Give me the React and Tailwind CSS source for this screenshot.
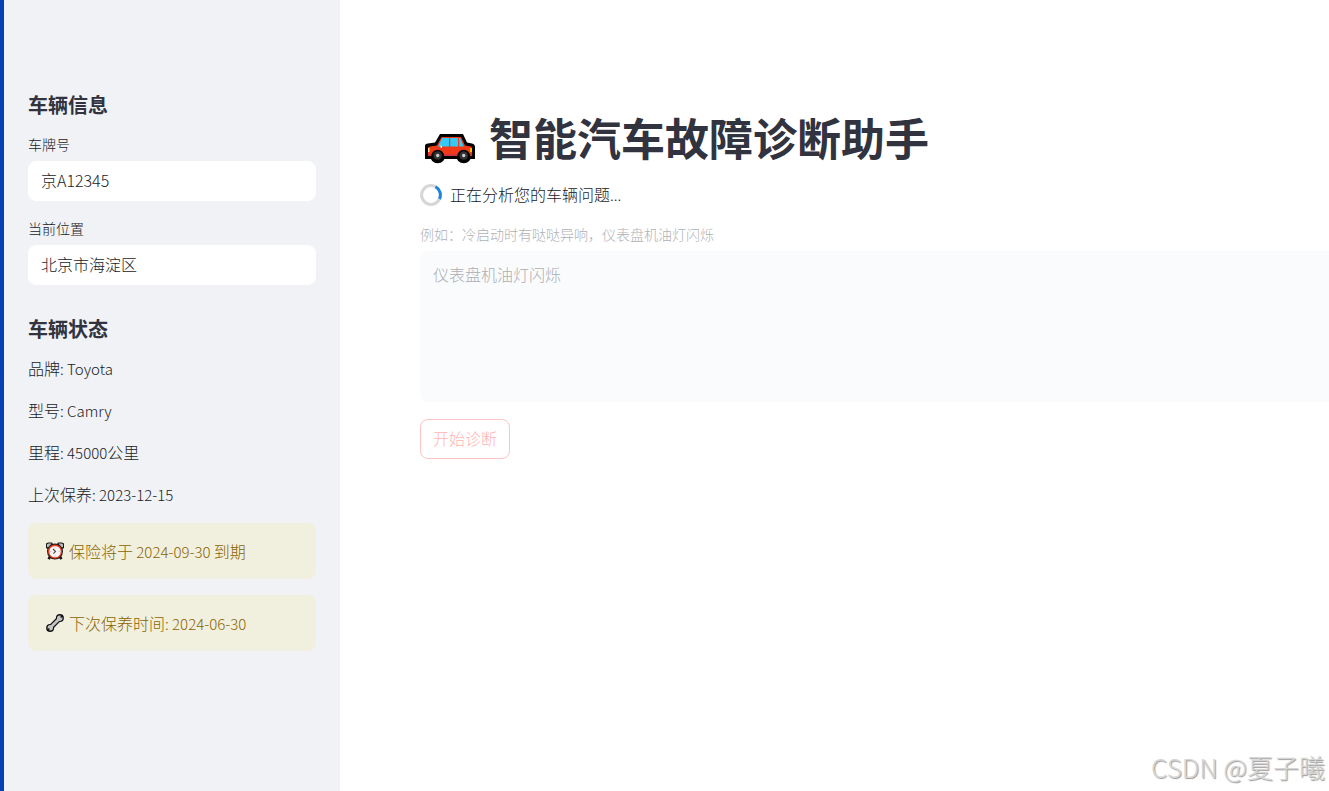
import React, { useState } from "react";

const vehicleStatus = [
  { label: "品牌", value: "Toyota" },
  { label: "型号", value: "Camry" },
  { label: "里程", value: "45000", unit: "公里" },
  { label: "上次保养", value: "2023-12-15" },
];

const CarIcon = () => (
  <svg className="w-[50px] h-[30px] shrink-0" viewBox="0 0 50 30" aria-hidden="true">
    <path d="M0 12Q0 9.5 3 9.5L10 8.5L15 0H38L42 8.5L47 9.5Q50 10 50 13V25H0Z" fill="#000" />
    <circle cx="12.7" cy="21.5" r="7.8" fill="#000" />
    <circle cx="38.7" cy="21.5" r="7.8" fill="#000" />
    <path d="M3 14Q3 12.5 5 12.5L12 11.5L16.5 3H36L40 11.5L46 12.5Q47 13 47 15V22H3Z" fill="#f03a17" />
    <path d="M3 20H47V22H3Z" fill="#d13438" />
    <path d="M17 4H24V12.5H13Z" fill="#35c9f5" />
    <path d="M25.2 4H33V12.5H25.2Z" fill="#35c9f5" />
    <path d="M34.2 4H35.2L38.8 12.5H34.2Z" fill="#35c9f5" />
    <path d="M3 14H4.5V18H3Z" fill="#ffe08a" />
    <path d="M45 14H47V18H45Z" fill="#ffb900" />
    <path d="M15.5 11.5H17V14H15.5Z" fill="#e3e3e3" />
    <path d="M6.4 22A6.3 6.3 0 0 1 19 22ZM32.4 22A6.3 6.3 0 0 1 45 22Z" fill="#000" />
    <circle cx="12.7" cy="21.5" r="4.3" fill="#333" />
    <circle cx="38.7" cy="21.5" r="4.3" fill="#333" />
    <circle cx="12.7" cy="21.5" r="1.7" fill="#ccc" />
    <circle cx="38.7" cy="21.5" r="1.7" fill="#ccc" />
  </svg>
);

const ClockIcon = () => (
  <svg className="w-[18px] h-[18px] shrink-0" viewBox="0 0 18 18" aria-hidden="true">
    <path d="M0 6V1.5L2 0.5H6L7 2H11L12 0.5H16L18 1.5V6L15.5 7.5H2.5Z" fill="#1a1a1a" />
    <path d="M1 5V2.2L2.6 1.4H5.6L2.3 5.6ZM17 5V2.2L15.4 1.4H12.4L15.7 5.6Z" fill="#bcbcbc" />
    <path d="M4.5 14L2.6 17.2M13.5 14L15.4 17.2" stroke="#111" strokeWidth="2.6" />
    <circle cx="9" cy="9.6" r="8" fill="#1a1a1a" />
    <circle cx="9" cy="9.6" r="7.1" fill="#e8391c" />
    <circle cx="9" cy="9.6" r="5.7" fill="#f7f7f7" />
    <path d="M7 7L9.5 9.6L7.3 11.7" fill="none" stroke="#444" strokeWidth="1.1" />
    <path d="M9 4.8V5.8M9 13.4V14.4M4.2 9.6H5.2M12.8 9.6H13.8" stroke="#999" strokeWidth="0.8" />
  </svg>
);

const WrenchIcon = () => (
  <svg className="w-[18px] h-[18px] shrink-0" viewBox="0 0 18 18" aria-hidden="true">
    <path d="M4.2 13.8L13.8 4.2" stroke="#111" strokeWidth="5.4" />
    <circle cx="13.9" cy="4.1" r="4" fill="#111" />
    <circle cx="4.1" cy="13.9" r="4" fill="#111" />
    <circle cx="13.7" cy="4.3" r="2.7" fill="#c4c4c4" />
    <circle cx="4.3" cy="13.7" r="2.7" fill="#c4c4c4" />
    <path d="M4.2 13.8L13.8 4.2" stroke="#c4c4c4" strokeWidth="2.9" />
    <path d="M14.6 3.4L16.6 1.4M3.4 14.6L1.4 16.6" stroke="#111" strokeWidth="1.4" />
  </svg>
);

const Spinner = () => (
  <svg className="w-[22px] h-[22px] shrink-0" viewBox="0 0 22 22" aria-hidden="true">
    <circle cx="11" cy="11" r="9.4" fill="none" stroke="#d5d6d8" strokeWidth="3" />
    <path d="M15.5 2.8A9.4 9.4 0 0 1 19.5 15" fill="none" stroke="#1c83e1" strokeWidth="3" />
  </svg>
);

// Latin letters and digits look too large next to the Chinese text at the same size
const Latin = ({ children }) => <span className="text-[15px] leading-none">{children}</span>;

const TextField = ({ id, label, value, onChange }) => (
  <div className="flex flex-col gap-[7px]">
    <label htmlFor={id} className="text-sm leading-5">
      {label}
    </label>
    <input
      id={id}
      type="text"
      value={value}
      onChange={(e) => onChange(e.target.value)}
      className="w-full h-10 px-3 pb-0.5 rounded-lg bg-white border border-white text-base outline-none"
    />
  </div>
);

const Notice = ({ icon, children }) => (
  <div className="flex items-center gap-[5px] h-14 px-4 pl-[18px] rounded-lg bg-[#f1f0df] text-[#8a6400] text-base">
    {icon}
    <p>{children}</p>
  </div>
);

const App = () => {
  const [plate, setPlate] = useState("京A12345");
  const [location, setLocation] = useState("北京市海淀区");

  return (
    <div className="relative flex min-h-screen bg-white text-[#181a26] font-light font-['Noto_Sans_CJK_SC',sans-serif]">
      {/* Sidebar */}
      <aside className="w-[340px] shrink-0 border-l-4 border-[#0540b5] bg-[#f0f2f6] px-6 pt-[93px] pb-24">
        <section>
          <h2 className="text-xl leading-6 font-bold text-[#31333f]">车辆信息</h2>
          <div className="flex flex-col gap-[17px] mt-[17px]">
            <TextField id="plate" label="车牌号" value={plate} onChange={setPlate} />
            <TextField id="location" label="当前位置" value={location} onChange={setLocation} />
          </div>
        </section>

        <section className="mt-8">
          <h2 className="text-xl leading-6 font-bold text-[#31333f]">车辆状态</h2>
          <ul className="flex flex-col gap-4 mt-3.5">
            {vehicleStatus.map((item) => (
              <li key={item.label} className="text-base leading-[26px]">
                {item.label}
                <Latin>: {item.value}</Latin>
                {item.unit}
              </li>
            ))}
          </ul>
          <div className="flex flex-col gap-4 mt-4">
            <Notice icon={<ClockIcon />}>
              保险将于<Latin> 2024-09-30 </Latin>到期
            </Notice>
            <Notice icon={<WrenchIcon />}>
              下次保养时间<Latin>: 2024-06-30</Latin>
            </Notice>
          </div>
        </section>
      </aside>

      {/* Main content */}
      <main className="flex-1 min-w-0 pl-20 pt-[110px]">
        <h1 className="flex items-end gap-3.5 pl-[5px] text-[44px] leading-[54px] font-bold text-[#31333f]">
          <CarIcon />
          智能汽车故障诊断助手
        </h1>

        <div className="flex items-center gap-2 mt-[18px] text-base leading-6" role="status">
          <Spinner />
          <p className="pb-0.5">
            正在分析您的车辆问题<Latin>...</Latin>
          </p>
        </div>

        <div className="flex flex-col gap-[7px] mt-4">
          <label htmlFor="problem" className="text-sm leading-5 text-[#b0b1b5]">
            例如：冷启动时有哒哒异响，仪表盘机油灯闪烁
          </label>
          <textarea
            id="problem"
            disabled
            defaultValue="仪表盘机油灯闪烁"
            className="block w-full h-[151px] resize-none rounded-l-lg bg-[#fafbfd] px-[13px] py-[11px] text-base text-[#adaeb2]"
          />
        </div>

        <button
          type="button"
          disabled
          className="mt-[17px] h-10 px-3 pb-0.5 rounded-lg border border-[#ffc3c3] bg-white text-base text-[#ffb4b4]"
        >
          开始诊断
        </button>
      </main>

      <span className="absolute right-1 bottom-1.5 text-[26px] leading-9 text-[#d6d6d6] [text-shadow:1px_1px_1px_#999]">
        CSDN @夏子曦
      </span>
    </div>
  );
};

export default App;
